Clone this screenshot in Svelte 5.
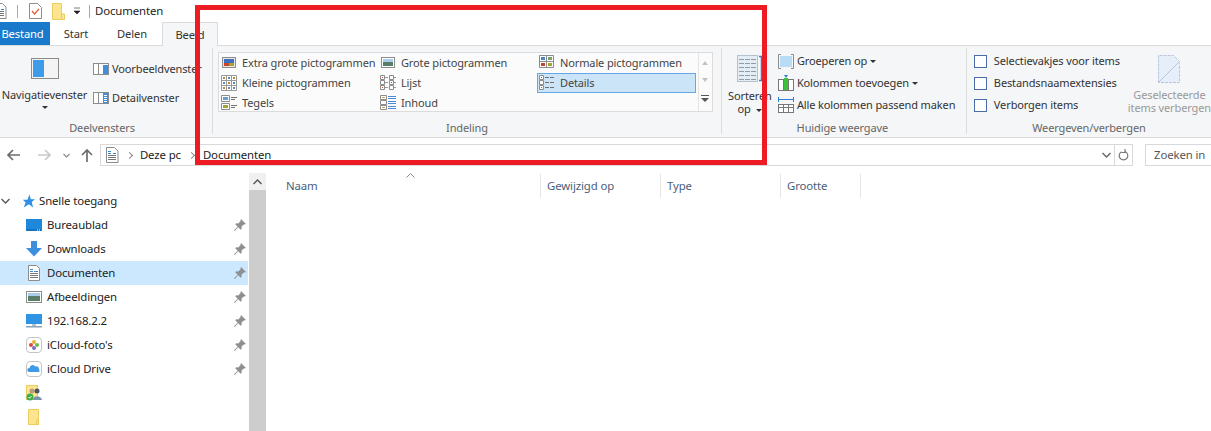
<script>
	const layouts = [
		{ label: 'Extra grote pictogrammen', icon: 'xl' },
		{ label: 'Grote pictogrammen', icon: 'large' },
		{ label: 'Normale pictogrammen', icon: 'medium' },
		{ label: 'Kleine pictogrammen', icon: 'small' },
		{ label: 'Lijst', icon: 'list' },
		{ label: 'Details', icon: 'details', selected: true },
		{ label: 'Tegels', icon: 'tiles' },
		{ label: 'Inhoud', icon: 'content' }
	];
	const checks = ['Selectievakjes voor items', 'Bestandsnaamextensies', 'Verborgen items'];
	const places = [
		{ label: 'Bureaublad', icon: 'desktop' },
		{ label: 'Downloads', icon: 'down' },
		{ label: 'Documenten', icon: 'doc', active: true },
		{ label: 'Afbeeldingen', icon: 'pics' },
		{ label: '192.168.2.2', icon: 'monitor' },
		{ label: "iCloud-foto's", icon: 'photos' },
		{ label: 'iCloud Drive', icon: 'cloud' }
	];
	const columns = [
		{ label: 'Naam', width: 261 },
		{ label: 'Gewijzigd op', width: 120 },
		{ label: 'Type', width: 120 },
		{ label: 'Grootte', width: 80 }
	];
</script>

{#snippet docIcon()}
	<svg width="14" height="16" viewBox="0 0 14 16">
		<path d="M1.500.5h8l3.500 3.500v11.500h-11.500z" fill="#fff" stroke="#8c8c8c" />
		<path d="M3 4.500h3M3 6.500h3M8 6.500h3" stroke="#3a86d8" />
		<path d="M3 8.500h8M3 10.500h8M3 12.500h8" stroke="#777" />
	</svg>
{/snippet}

{#snippet layoutIcon(kind)}
	<svg width="16" height="16" viewBox="0 0 16 16">
		{#if kind === 'xl'}
			<rect x="1.500" y="2.500" width="13" height="10" fill="#e8e8e8" stroke="#8c8c8c" />
			<rect x="3" y="4" width="10" height="7" fill="#3d6fc0" />
			<rect x="3" y="8" width="5" height="3" fill="#c8452c" />
			<rect x="8" y="8" width="5" height="3" fill="#a6a32e" />
		{:else if kind === 'large'}
			<rect x="1.500" y="2.500" width="13" height="10" fill="#fff" stroke="#8c8c8c" />
			<rect x="3" y="4" width="10" height="3" fill="#a9cdea" />
			<rect x="3" y="7" width="10" height="4" fill="#5a7d6a" />
		{:else if kind === 'medium'}
			<path d="M.5.500h14v12h-14zM7.500.500v12M.5 6.500h14" fill="#fff" stroke="#8c8c8c" />
			<rect x="2" y="2" width="4" height="3" fill="#4c86c6" />
			<rect x="9" y="2" width="4" height="3" fill="#7aa36a" />
			<rect x="2" y="8" width="4" height="3" fill="#c8452c" />
			<rect x="9" y="8" width="4" height="3" fill="#a6a32e" />
		{:else if kind === 'small'}
			<path d="M.5.500h15v15h-15zM5.500.500v15M10.500.500v15M.5 5.500h15M.5 10.500h15" fill="#fff" stroke="#9a9a9a" />
			<path d="M2 2h2v2h-2zM12 2h2v2h-2zM7 7h2v2h-2zM2 12h2v2h-2z" fill="#b9893c" />
			<path d="M7 2h2v2h-2zM12 7h2v2h-2zM2 7h2v2h-2zM7 12h2v2h-2zM12 12h2v2h-2z" fill="#5b88bd" />
		{:else if kind === 'list'}
			<path d="M.5.500h4v4h-4zM.5 5.500h4v4h-4zM.5 10.500h4v4h-4zM9.500.500h4v4h-4zM9.500 5.500h4v4h-4zM9.500 10.500h4v4h-4z" fill="#fff" stroke="#8c8c8c" />
			<path d="M5 2.500h3M5 7.500h3M5 12.500h3M14 2.500h2M14 7.500h2M14 12.500h2" stroke="#9a9a9a" />
			<path d="M2 2h1v1h-1zM11 7h1v1h-1zM2 12h1v1h-1z" fill="#c8452c" />
		{:else if kind === 'details'}
			<path d="M.5.500h4v4h-4zM.5 5.500h4v4h-4zM.5 10.500h4v4h-4z" fill="#fff" stroke="#8c8c8c" />
			<path d="M6 2.500h4M11 2.500h4M6 7.500h4M11 7.500h4M6 12.500h4M11 12.500h4" stroke="#6f6f6f" />
			<path d="M2 2h1v1h-1zM2 12h1v1h-1z" fill="#c8452c" />
		{:else if kind === 'tiles'}
			<path d="M.5.500h8v6h-8zM.5 8.500h8v6h-8z" fill="#fff" stroke="#8c8c8c" />
			<rect x="2" y="2" width="5" height="3" fill="#6d9dcf" />
			<rect x="2" y="10" width="5" height="3" fill="#a6a32e" />
			<path d="M10 2.500h6M10 4.500h4M10 10.500h6M10 12.500h4" stroke="#6f6f6f" />
		{:else}
			<path d="M.5.500h6v4h-6zM.5 5.500h6v4h-6zM.5 10.500h6v4h-6z" fill="#fff" stroke="#8c8c8c" />
			<path d="M2 2h3v1h-3zM2 12h3v1h-3z" fill="#c8a23c" />
			<path d="M8 1.500h8M8 3.500h8M8 6.500h8M8 8.500h8M8 11.500h8M8 13.500h8" stroke="#4a8bd6" />
		{/if}
	</svg>
{/snippet}

{#snippet placeIcon(kind)}
	<svg width="16" height="16" viewBox="0 0 16 16">
		{#if kind === 'desktop'}
			<rect x="0" y="2" width="16" height="12" fill="#1e88dc" />
			<rect x=".5" y="12.500" width="15" height="1" fill="#0b5fa5" />
			<path d="M11 13h1M13 13h1" stroke="#fff" />
		{:else if kind === 'down'}
			<path d="M5 0h6v7h5l-8 8.500-8-8.500h5z" fill="#3d8fde" />
		{:else if kind === 'doc'}
			<path d="M2.500.500h8l3 3v12h-11z" fill="#fff" stroke="#8c8c8c" />
			<path d="M4 4.500h3M4 6.500h3M8 6.500h4" stroke="#3a86d8" />
			<path d="M4 8.500h8M4 10.500h8M4 12.500h8" stroke="#777" />
		{:else if kind === 'pics'}
			<rect x=".5" y="2.500" width="15" height="11" fill="#fff" stroke="#8c8c8c" />
			<rect x="2" y="4" width="12" height="3" fill="#a9cdea" />
			<rect x="2" y="7" width="12" height="5" fill="#5a7d6a" />
		{:else if kind === 'monitor'}
			<rect x="0" y="1" width="16" height="10" fill="#2f94e4" />
			<rect x="6" y="11" width="4" height="2" fill="#a8c6dc" />
			<rect x="0" y="13" width="16" height="1.500" fill="#8aa2b4" />
		{:else if kind === 'photos'}
			<rect x=".5" y=".5" width="15" height="15" rx="3.500" fill="#fff" stroke="#c4c4c4" />
			<circle cx="8" cy="5" r="2" fill="#e9b32f" />
			<circle cx="11" cy="8" r="2" fill="#6fb84a" />
			<circle cx="8" cy="11" r="2" fill="#7f6cc4" />
			<circle cx="5" cy="8" r="2" fill="#dd4b3e" />
		{:else}
			<rect x=".5" y=".5" width="15" height="15" rx="3.500" fill="#fff" stroke="#c4c4c4" />
			<path d="M3 11a2 2 0 0 1 .5-4 3 3 0 0 1 5.500-1.500 2.800 2.800 0 0 1 4 3 1.400 1.400 0 0 1-.5 2.500z" fill="#3f9be8" />
		{/if}
	</svg>
{/snippet}

{#snippet pin()}
	<svg class="pin" width="12" height="12" viewBox="0 0 12 12">
		<path d="M7 0l5 5-1.200.600-.8-.3-2.500 2.500.200 2-1 1-2.500-2.500-3.500 3.700-.7-.7 3.700-3.500-2.500-2.500 1-1 2 .2 2.500-2.500-.3-.8z" fill="#8d9093" />
	</svg>
{/snippet}

<div class="window">
	<div class="titlebar">
		<div class="qat-doc">{@render docIcon()}</div>
		<span class="qat-sep"></span>
		<svg class="qat-check" width="13" height="16" viewBox="0 0 13 16">
			<path d="M.5.500h8l4 4v11h-12z" fill="#fff" stroke="#8c8c8c" />
			<path d="M3 8l2.500 3 4.500-5" fill="none" stroke="#e0603a" stroke-width="1.300" />
		</svg>
		<svg class="qat-folder" width="13" height="17" viewBox="0 0 13 17">
			<path d="M.5.500h9v16h-9z" fill="#fde58f" stroke="#eccb5f" />
			<path d="M9.500 11h3v5.500h-3z" fill="#fde58f" stroke="#eccb5f" />
		</svg>
		<svg class="qat-drop" width="8" height="8" viewBox="0 0 8 8">
			<path d="M1 1h6M1 4h6l-3 3z" fill="#222" stroke="#222" stroke-width=".6" />
		</svg>
		<span class="qat-sep second"></span>
		<span class="title">Documenten</span>
	</div>

	<div class="tabs">
		<span class="tab file">Bestand</span>
		<span class="tab start">Start</span>
		<span class="tab share">Delen</span>
		<span class="tab current">Beeld</span>
	</div>

	<div class="ribbon">
		<section class="group panes">
			<div class="group-body panes-body">
				<div class="big nav">
					<svg width="28" height="24" viewBox="0 0 28 24">
						<rect x=".5" y=".5" width="27" height="20" fill="#f4f4f4" stroke="#8c8c8c" />
						<rect x="2" y="2" width="11" height="17" fill="#3d9be9" />
					</svg>
					<span class="big-label">Navigatievenster</span>
					<span class="caret"></span>
				</div>
				<div class="pane-links">
					<div class="pane-link">
						<svg width="16" height="13" viewBox="0 0 16 13">
							<rect x=".5" y=".5" width="15" height="11" fill="#fff" stroke="#8c8c8c" />
							<path d="M5.500 1v10" stroke="#8c8c8c" />
							<rect x="10" y="2" width="5" height="9" fill="#3d8fde" />
						</svg>
						Voorbeeldvenster
					</div>
					<div class="pane-link">
						<svg width="16" height="13" viewBox="0 0 16 13">
							<rect x=".5" y=".5" width="15" height="11" fill="#fff" stroke="#8c8c8c" />
							<path d="M5.500 1v10" stroke="#8c8c8c" />
							<rect x="10" y="1" width="5" height="10" fill="#3d8fde" />
							<path d="M11 3.500h3M11 5.500h3M11 7.500h3M11 9.500h3" stroke="#fff" />
						</svg>
						Detailvenster
					</div>
				</div>
			</div>
			<div class="group-label">Deelvensters</div>
		</section>

		<section class="group layout">
			<div class="group-body">
				<div class="gallery">
					<div class="gallery-grid">
						{#each layouts as item (item.label)}
							<div class="cell" class:selected={item.selected}>
								{@render layoutIcon(item.icon)}
								<span>{item.label}</span>
							</div>
						{/each}
					</div>
					<div class="gallery-scroll">
						<span class="arrow up"></span>
						<span class="arrow down"></span>
						<span class="more"></span>
					</div>
				</div>
			</div>
			<div class="group-label">Indeling</div>
		</section>

		<section class="group view">
			<div class="group-body view-body">
				<div class="big sort">
					<svg width="26" height="28" viewBox="0 0 26 28">
						<rect x=".5" y=".5" width="20" height="26" fill="#e4edf3" stroke="#b4c2cc" />
						<path d="M2 4.500h17M2 8.500h17M2 12.500h17M2 16.500h17M2 20.500h17M2 24.500h17" stroke="#8f9ca6" stroke-dasharray="5 1" />
						<path d="M22 1.500h2.500v24h-2.500" fill="none" stroke="#2f7fd0" stroke-width="1.500" />
					</svg>
					<span class="big-label">Sorteren</span>
					<span class="big-label">op <span class="caret inline"></span></span>
				</div>
				<div class="view-links">
					<div class="view-link">
						<svg width="16" height="15" viewBox="0 0 16 15">
							<rect x="2" y="2" width="12" height="11" fill="#b9dcf6" />
							<path d="M3 .5h-2.500v14h2.500M13 .5h2.500v14h-2.500" fill="none" stroke="#8c8c8c" />
						</svg>
						<span>Groeperen op</span><span class="caret inline"></span>
					</div>
					<div class="view-link">
						<svg width="16" height="16" viewBox="0 0 16 16">
							<rect x=".5" y="4.500" width="15" height="11" fill="#fff" stroke="#777" />
							<path d="M5.500 5v10M10.500 5v10" stroke="#777" />
							<rect x="6" y="3" width="4" height="12" fill="#3cc13c" />
							<path d="M6 0h4l-2 3z" fill="#2f7fd0" />
						</svg>
						<span>Kolommen toevoegen</span><span class="caret inline"></span>
					</div>
					<div class="view-link">
						<svg width="16" height="16" viewBox="0 0 16 16">
							<path d="M1 2.500h14M.5 0v5M15.500 0v5" stroke="#2f7fd0" fill="none" />
							<rect x=".5" y="7.500" width="15" height="8" fill="#fff" stroke="#777" />
							<path d="M.5 10.500h15M5.500 8v7M10.500 8v7" stroke="#777" />
						</svg>
						<span>Alle kolommen passend maken</span>
					</div>
				</div>
			</div>
			<div class="group-label">Huidige weergave</div>
		</section>

		<section class="group toggles">
			<div class="group-body toggles-body">
				<div class="check-list">
					{#each checks as label (label)}
						<div class="check"><span class="box"></span>{label}</div>
					{/each}
				</div>
				<div class="big hide">
					<svg width="22" height="28" viewBox="0 0 22 28">
						<path d="M.5 27.500v-27h15l6 6v21z" fill="#e6eefa" />
						<path d="M.5 27.500v-27h15l6 6v3M21.500 11v16.500h-21" fill="none" stroke="#b8c6dc" stroke-dasharray="3 1" />
						<path d="M1 27l20-20" stroke="#b8c6dc" />
					</svg>
					<span class="big-label">Geselecteerde</span>
					<span class="big-label">items verbergen</span>
				</div>
			</div>
			<div class="group-label">Weergeven/verbergen</div>
		</section>
	</div>

	<div class="addressbar">
		<div class="nav-buttons">
			<svg width="13" height="12" viewBox="0 0 13 12"><path d="M6 1l-5 5 5 5M1 6h12" fill="none" stroke="#6d6d6d" stroke-width="1.700" /></svg>
			<svg class="fwd" width="13" height="12" viewBox="0 0 13 12"><path d="M7 1l5 5-5 5M12 6h-12" fill="none" stroke="#c9c9c9" stroke-width="1.700" /></svg>
			<svg class="recent" width="7" height="5" viewBox="0 0 7 5"><path d="M.5 1l3 3 3-3" fill="none" stroke="#8a8a8a" stroke-width="1.200" /></svg>
			<svg class="upbtn" width="12" height="13" viewBox="0 0 12 13"><path d="M1 6l5-5 5 5M6 1v12" fill="none" stroke="#6d6d6d" stroke-width="1.700" /></svg>
		</div>
		<div class="address">
			{@render docIcon()}
			<span class="crumb-sep first"></span>
			<span class="crumb">Deze pc</span>
			<span class="crumb-sep"></span>
			<span class="crumb">Documenten</span>
			<svg class="addr-chevron" width="9" height="6" viewBox="0 0 9 6"><path d="M.5 1l4 4 4-4" fill="none" stroke="#666" stroke-width="1.400" /></svg>
			<span class="addr-refresh">
				<svg width="11" height="12" viewBox="0 0 11 12"><path d="M7.500 2.800a4.300 4.300 0 1 1-4 0M7 0v3.500h-3.500" fill="none" stroke="#777" stroke-width="1.200" /></svg>
			</span>
		</div>
		<div class="search">Zoeken in</div>
	</div>

	<div class="explorer">
		<nav class="tree">
			<div class="row head">
				<svg width="9" height="6" viewBox="0 0 9 6"><path d="M.5 1l4 4 4-4" fill="none" stroke="#555" stroke-width="1.300" /></svg>
				<svg class="star" width="15" height="15" viewBox="0 0 16 15"><path d="M10 0l1.500 5h4.500l-3.500 3 1.500 6-4.500-3.500-5.500 3.500 2-5.500-3-3h5z" fill="#2f8fe6" /></svg>
				<span>Snelle toegang</span>
			</div>
			{#each places as place (place.label)}
				<div class="row" class:active={place.active}>
					{@render placeIcon(place.icon)}
					<span class="row-label">{place.label}</span>
					{@render pin()}
				</div>
			{/each}
			<div class="row">
				<svg width="16" height="16" viewBox="0 0 16 16">
					<rect x=".5" y=".5" width="11" height="14" fill="#fde58f" stroke="#eccb5f" />
					<circle cx="6" cy="6" r="2.500" fill="#b79b7a" />
					<circle cx="11" cy="6" r="2.500" fill="#4b5560" />
					<path d="M7 15c0-5 8-5 9 0z" fill="#7895b0" />
					<circle cx="4" cy="12" r="3.500" fill="#3fae49" />
					<path d="M2.500 12l1 1.200 2-2" fill="none" stroke="#fff" />
				</svg>
			</div>
			<div class="row">
				<svg width="16" height="16" viewBox="0 0 16 16">
					<path d="M2.500.5h10v15h-10z" fill="#fde58f" stroke="#eccb5f" />
					<path d="M10.500 11h2v4.500h-2z" fill="#fde58f" stroke="#eccb5f" />
				</svg>
			</div>
		</nav>
		<div class="tree-scroll">
			<div class="scroll-btn"><svg width="9" height="6" viewBox="0 0 9 6"><path d="M.5 5l4-4 4 4" fill="none" stroke="#555" stroke-width="1.400" /></svg></div>
			<div class="scroll-thumb"></div>
		</div>
		<div class="files">
			<svg class="sort-caret" width="9" height="5" viewBox="0 0 9 5"><path d="M.5 4.500l4-4 4 4" fill="none" stroke="#8a8a8a" /></svg>
			<div class="file-head">
				{#each columns as col (col.label)}
					<div class="col" style="width:{col.width}px">{col.label}</div>
				{/each}
			</div>
		</div>
	</div>

	<div class="annotation"></div>
</div>

<style>
	:global(body) {
		margin: 0;
		background: #fff;
	}
	.window {
		position: relative;
		width: 1211px;
		height: 431px;
		overflow: hidden;
		background: #fff;
		color: #333;
		font: 11px/16px "Noto Sans", sans-serif;
		letter-spacing: -0.12px;
	}
	svg {
		display: block;
		flex: none;
	}

	/* title bar */
	.titlebar {
		display: flex;
		align-items: center;
		height: 22px;
		font-size: 11.4px;
		color: #222;
	}
	.qat-doc {
		margin-left: -7px;
	}
	.qat-sep {
		width: 1px;
		height: 13px;
		margin-left: 10px;
		background: #a8a8a8;
	}
	.qat-sep.second {
		margin-left: 8px;
	}
	.qat-check {
		margin-left: 11px;
	}
	.qat-folder {
		margin-left: 10px;
	}
	.qat-drop {
		margin-left: 8px;
	}
	.title {
		margin-left: 5px;
	}

	/* tabs */
	.tabs {
		display: flex;
		height: 23px;
		font-size: 11.2px;
	}
	.tab {
		display: flex;
		align-items: center;
		justify-content: center;
		box-sizing: border-box;
		height: 23px;
	}
	.file {
		width: 50px;
		background: #1979ca;
		color: #fff;
		padding-right: 5px;
	}
	.start {
		width: 52px;
	}
	.share {
		width: 60px;
	}
	.current {
		width: 56px;
		height: 24px;
		background: #f5f6f7;
		border: 1px solid #dadbdc;
		border-bottom: 0;
		position: relative;
		z-index: 1;
	}

	/* ribbon */
	.ribbon {
		display: flex;
		height: 93px;
		box-sizing: border-box;
		background: #f5f6f7;
		border-top: 1px solid #dadbdc;
		border-bottom: 1px solid #dadbdc;
	}
	.group {
		display: flex;
		flex-direction: column;
		box-sizing: border-box;
		margin-top: 2px;
		height: 86px;
		border-right: 1px solid #dcdcdc;
	}
	.group-body {
		flex: none;
		display: flex;
		height: 72px;
	}
	.group-label {
		height: 14px;
		text-align: center;
		color: #666;
	}
	.panes {
		width: 213px;
	}
	.panes .group-label {
		padding-right: 8px;
	}
	.panes-body {
		align-items: flex-start;
	}
	.big {
		display: flex;
		flex-direction: column;
		align-items: center;
		line-height: 13px;
	}
	.big-label {
		height: 13px;
		white-space: nowrap;
	}
	.nav {
		width: 89px;
		padding-top: 10px;
	}
	.nav svg {
		margin-bottom: 6px;
	}
	.nav .caret {
		margin-top: 5px;
	}
	.caret {
		display: inline-block;
		width: 0;
		height: 0;
		border: 3px solid transparent;
		border-top: 3px solid #333;
		border-bottom: 0;
	}
	.caret.inline {
		margin-left: 3px;
		vertical-align: middle;
	}
	.pane-links {
		display: flex;
		flex-direction: column;
		gap: 13px;
		padding: 13px 0 0 4px;
		white-space: nowrap;
	}
	.pane-link {
		display: flex;
		align-items: center;
		gap: 3px;
	}

	.layout {
		width: 509px;
	}
	.gallery {
		display: flex;
		box-sizing: border-box;
		width: 495px;
		height: 60px;
		margin: 4px 0 0 5px;
		background: #fbfbfb;
		border: 1px solid #dcdcdc;
	}
	.gallery-grid {
		width: 477px;
		display: grid;
		grid-template-columns: 159px 159px 159px;
		grid-auto-rows: 20px;
	}
	.cell {
		display: flex;
		align-items: center;
		gap: 5px;
		box-sizing: border-box;
		padding-left: 2px;
		white-space: nowrap;
		color: #444;
	}
	.cell.selected {
		background: #cce4f7;
		box-shadow: inset 0 0 0 1px #66a7e8;
	}
	.gallery-scroll {
		flex: 1;
		display: flex;
		flex-direction: column;
		align-items: center;
		border-left: 1px solid #e4e4e4;
		margin-left: 2px;
	}
	.arrow {
		width: 0;
		height: 0;
		border: 3px solid transparent;
		margin-top: 8px;
	}
	.arrow.up {
		border-bottom: 4px solid #c2c2c2;
		border-top: 0;
	}
	.arrow.down {
		border-top: 4px solid #c2c2c2;
		border-bottom: 0;
		margin-top: 13px;
	}
	.more {
		width: 8px;
		height: 1px;
		margin-top: 13px;
		background: #555;
		position: relative;
	}
	.more::after {
		content: "";
		position: absolute;
		left: 0;
		top: 3px;
		border: 4px solid transparent;
		border-top: 4px solid #555;
		border-bottom: 0;
	}

	.view {
		width: 245px;
	}
	.view .group-label {
		padding-right: 3px;
	}
	.view-body {
		align-items: flex-start;
	}
	.sort {
		width: 56px;
		padding-top: 7px;
		flex: none;
	}
	.sort svg {
		margin-bottom: 6px;
	}
	.view-links {
		display: flex;
		flex-direction: column;
		gap: 6px;
		padding-top: 5px;
		white-space: nowrap;
	}
	.view-link {
		display: flex;
		align-items: center;
		height: 16px;
	}
	.view-link svg {
		margin-right: 3px;
	}

	.toggles {
		flex: 1;
		border-right: 0;
	}
	.toggles-body {
		align-items: flex-start;
	}
	.check-list {
		display: flex;
		flex-direction: column;
		gap: 6px;
		width: 155px;
		padding: 5px 0 0 7px;
		flex: none;
	}
	.check {
		display: flex;
		align-items: center;
		gap: 7px;
		height: 16px;
		white-space: nowrap;
	}
	.box {
		width: 11px;
		height: 11px;
		background: #fff;
		border: 1px solid #4a6da7;
	}
	.hide {
		padding-top: 7px;
		color: #999;
		margin-left: -1px;
	}
	.hide svg {
		margin-bottom: 5px;
	}

	/* address bar */
	.addressbar {
		display: flex;
		align-items: flex-start;
		height: 28px;
		box-sizing: border-box;
		padding-top: 6px;
		font-size: 11.4px;
	}
	.nav-buttons {
		display: flex;
		align-items: center;
		height: 22px;
		width: 100px;
		padding-left: 7px;
		box-sizing: border-box;
	}
	.fwd {
		margin-left: 18px;
	}
	.recent {
		margin-left: 12px;
	}
	.upbtn {
		margin-left: 11px;
	}
	.address {
		display: flex;
		align-items: center;
		box-sizing: border-box;
		width: 1034px;
		height: 22px;
		padding-left: 4px;
		border: 1px solid #d9d9d9;
		color: #222;
	}
	.crumb-sep {
		width: 4px;
		height: 4px;
		margin: 0 9px 0 8px;
		border-top: 1px solid #888;
		border-right: 1px solid #888;
		transform: rotate(45deg);
	}
	.crumb-sep.first {
		margin: 0 8px 0 8px;
	}
	.crumb {
		white-space: nowrap;
	}
	.addr-chevron {
		margin-left: auto;
	}
	.addr-refresh {
		display: flex;
		align-items: center;
		justify-content: center;
		width: 17px;
		height: 20px;
		margin-left: 3px;
		border-left: 1px solid #d9d9d9;
	}
	.search {
		box-sizing: border-box;
		width: 66px;
		height: 22px;
		margin-left: 12px;
		padding: 2px 0 0 8px;
		border: 1px solid #d9d9d9;
		border-right: 0;
		color: #555;
	}

	/* navigation tree and file list */
	.explorer {
		display: flex;
		height: 266px;
		font-size: 11.4px;
	}
	.tree {
		width: 249px;
		padding-top: 23px;
		color: #222;
	}
	.row {
		display: flex;
		align-items: center;
		height: 24px;
		padding-left: 26px;
		box-sizing: border-box;
		width: 248px;
	}
	.row.head {
		padding-left: 1px;
	}
	.star {
		margin: 0 4px 0 10px;
	}
	.row.active {
		background: #cce8ff;
	}
	.row-label {
		margin-left: 5px;
		flex: 1;
	}
	.pin {
		margin-right: 2px;
	}
	.tree-scroll {
		width: 17px;
		margin-top: 7px;
		background: #f0f0f0;
	}
	.scroll-btn {
		display: flex;
		align-items: center;
		justify-content: center;
		height: 17px;
	}
	.scroll-thumb {
		height: 100%;
		background: #cdcdcd;
	}
	.files {
		position: relative;
		flex: 1;
		padding: 8px 0 0 14px;
	}
	.sort-caret {
		position: absolute;
		left: 140px;
		top: 7px;
	}
	.file-head {
		display: flex;
		height: 24px;
		color: #4c607a;
	}
	.col {
		box-sizing: border-box;
		padding: 4px 0 0 6px;
		border-right: 1px solid #e5e5e5;
	}
	.annotation {
		position: absolute;
		left: 195px;
		top: 5px;
		width: 572px;
		height: 160px;
		box-sizing: border-box;
		border: 5px solid #ed1c24;
		pointer-events: none;
		z-index: 2;
	}
</style>
